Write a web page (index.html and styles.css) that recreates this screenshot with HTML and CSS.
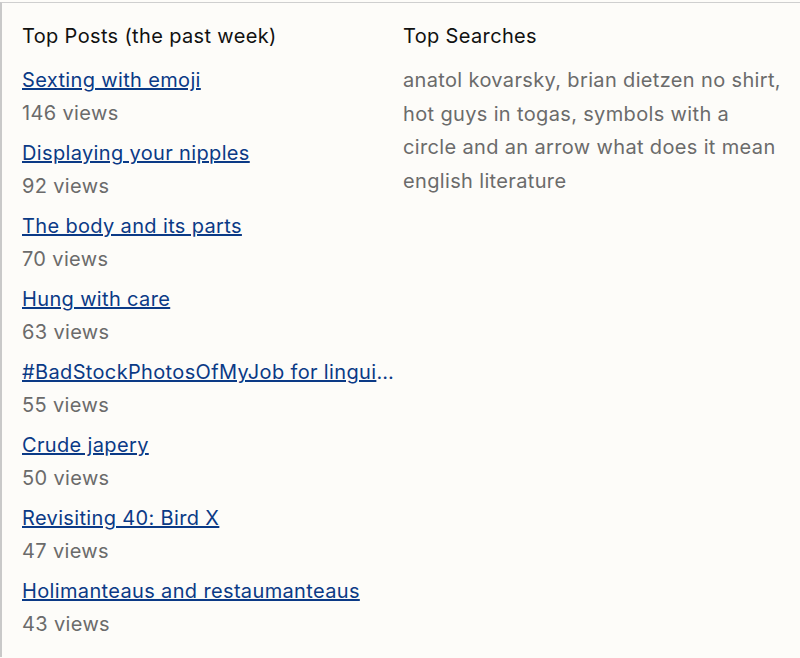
FILE: index.html
```html
<!DOCTYPE html>
<html lang="en">
<head>
<meta charset="utf-8">
<title>Top Posts</title>
<link rel="stylesheet" href="styles.css">
</head>
<body>
<div class="panel">
  <section class="col posts">
    <h2 class="title">Top Posts (the past week)</h2>
    <ul class="list">
      <li class="item"><a class="link" href="#">Sexting with emoji</a><span class="views">146 views</span></li>
      <li class="item"><a class="link" href="#">Displaying your nipples</a><span class="views">92 views</span></li>
      <li class="item"><a class="link" href="#">The body and its parts</a><span class="views">70 views</span></li>
      <li class="item"><a class="link" href="#">Hung with care</a><span class="views">63 views</span></li>
      <li class="item"><a class="link" href="#">#BadStockPhotosOfMyJob for linguists</a><span class="views">55 views</span></li>
      <li class="item"><a class="link" href="#">Crude japery</a><span class="views">50 views</span></li>
      <li class="item"><a class="link" href="#">Revisiting 40: Bird X</a><span class="views">47 views</span></li>
      <li class="item"><a class="link" href="#">Holimanteaus and restaumanteaus</a><span class="views">43 views</span></li>
    </ul>
  </section>
  <section class="col searches">
    <h2 class="title">Top Searches</h2>
    <p class="terms">anatol kovarsky, brian dietzen no shirt, hot guys in togas, symbols with a circle and an arrow what does it mean english literature</p>
  </section>
</div>
</body>
</html>
```
FILE: styles.css
```css
html, body {
  margin: 0;
  padding: 0;
  background: #fdfcf9;
}
body {
  padding-top: 2px;
  font-family: Inter, "Liberation Sans", Arial, sans-serif;
  font-size: 20px;
  letter-spacing: 0.35px;
}
.panel {
  border-top: 1px solid #cfcfcf;
  border-left: 2px solid #c9c9c9;
  min-height: 655px;
  box-sizing: border-box;
  display: grid;
  grid-template-columns: 381px 1fr;
  padding: 17px 0 0 20px;
}
.col {
  min-width: 0;
}
.posts {
  padding-right: 5px;
}
.title {
  margin: 0 0 11px;
  font-size: 20px;
  font-weight: normal;
  line-height: 33px;
  color: #111;
}
.list {
  list-style: none;
  margin: 0;
  padding: 0;
}
.item {
  display: flex;
  flex-direction: column;
  margin-bottom: 7px;
}
.link {
  color: #0b3a86;
  text-decoration: underline;
  line-height: 33px;
  white-space: nowrap;
  overflow: hidden;
  text-overflow: ellipsis;
}
.views {
  color: #6b6b6b;
  line-height: 33px;
}
.terms {
  margin: 0;
  color: #6b6b6b;
  line-height: 33.6px;
  padding-right: 14px;
}
```
